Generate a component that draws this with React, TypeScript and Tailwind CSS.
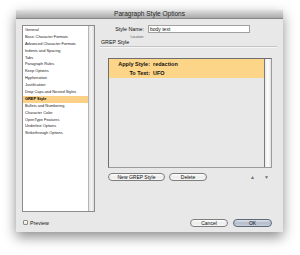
import React from "react";

const items = [
  "General",
  "Basic Character Formats",
  "Advanced Character Formats",
  "Indents and Spacing",
  "Tabs",
  "Paragraph Rules",
  "Keep Options",
  "Hyphenation",
  "Justification",
  "Drop Caps and Nested Styles",
  "GREP Style",
  "Bullets and Numbering",
  "Character Color",
  "OpenType Features",
  "Underline Options",
  "Strikethrough Options",
];

function Btn({ label, w, primary }: { label: string; w: string; primary?: boolean }) {
  return (
    <div
      className={
        "h-[8px] rounded-full border flex items-center justify-center text-[5px] leading-[6px] text-[#111] " +
        w +
        (primary
          ? " border-[#5d6878] bg-gradient-to-b from-[#dfe4ec] via-[#b3bccb] to-[#c9d0dc]"
          : " border-[#7e7e7e] bg-gradient-to-b from-white via-[#ececec] to-[#f6f6f6]")
      }
    >
      {label}
    </div>
  );
}

export default function App() {
  return (
    <div className="w-[300px] h-[255px] bg-white pt-[10px] pl-[16px] font-['Liberation_Sans',_Arial,_sans-serif]">
      <div className="w-[267px] h-[222px] flex flex-col shadow-[0_5px_12px_rgba(0,0,0,0.45)]">
        <div className="h-[9px] bg-gradient-to-b from-[#e2e2e2] to-[#a9a9a9] border-b border-[#858585] flex items-center justify-center">
          <span className="text-[6.5px] leading-[8px] text-[#1e1e1e]">Paragraph Style Options</span>
        </div>
        <div className="flex-1 bg-[#e8e8e8] flex flex-col px-[6px] pt-[6px]">
          <div className="flex h-[187px]">
            <div className="w-[73px] h-full border border-[#8c8c8c] bg-white flex">
              <div className="flex-1 pt-[1px]">
                {items.map((it) => (
                  <div
                    key={it}
                    className={
                      "h-[6.9px] pl-[2px] text-[3.9px] leading-[6.9px] whitespace-nowrap " +
                      (it === "GREP Style" ? "bg-[#fbd087] text-black font-bold" : "text-[#222]")
                    }
                  >
                    {it}
                  </div>
                ))}
              </div>
              <div className="w-[6px] h-full border-l border-[#b5b5b5] bg-gradient-to-r from-[#e4e4e4] via-[#f4f4f4] to-[#dcdcdc]" />
            </div>
            <div className="ml-[6px] w-[176px] flex flex-col">
              <div className="flex items-center h-[8px]">
                <div className="w-[43px] text-right text-[5.3px] leading-[8px] text-[#111]">Style Name:</div>
                <div className="ml-[4px] w-[102px] h-[8px] border border-[#a0a0a0] bg-white text-[5px] leading-[6px] pl-[1px] text-[#111]">
                  body text
                </div>
              </div>
              <div className="w-[43px] mt-[2px] text-right text-[3.3px] leading-[4px] text-[#555]">Location:</div>
              <div className="mt-[0px] text-[5.3px] leading-[6px] text-[#111]">GREP Style</div>
              <div className="-ml-[1px] w-[177px] h-[1px] mt-[1px] bg-[#c4c4c4] border-b border-[#f6f6f6] box-content" />
              <div className="mt-[10px] ml-[7px] w-[164px] h-[110px] border border-[#6e6e6e] border-r-[#9a9a9a] border-b-[#9a9a9a] bg-[#e8e8e8] flex">
                <div className="flex-1">
                  <div className="bg-[#fdd588] pt-[0.5px]">
                    <div className="flex h-[9px] items-center text-[5.5px] font-bold text-[#111]">
                      <div className="w-[41px] text-right">Apply Style:</div>
                      <div className="ml-[3px]">redaction</div>
                    </div>
                    <div className="flex h-[9px] items-center text-[5.5px] font-bold text-[#111]">
                      <div className="w-[41px] text-right">To Text:</div>
                      <div className="ml-[3px]">UFO</div>
                    </div>
                  </div>
                </div>
                <div className="w-[7px] h-full border-l border-[#7a7a7a] bg-gradient-to-r from-[#e9e9e9] via-white to-[#e2e2e2]" />
              </div>
              <div className="mt-[5px] ml-[7px] flex items-center pr-[8px]">
                <Btn label="New GREP Style" w="w-[57px]" />
                <div className="ml-[4px]">
                  <Btn label="Delete" w="w-[38px]" />
                </div>
                <div className="flex-1" />
                <span className="text-[5px] leading-[6px] text-[#6e6e6e]">▲</span>
                <span className="ml-[9px] text-[5px] leading-[6px] text-[#6e6e6e]">▼</span>
              </div>
            </div>
          </div>
          <div className="mt-[6px] h-[9px] flex items-center pr-[5px]">
            <div className="ml-[1px] w-[5px] h-[5px] border border-[#8c8c8c] bg-gradient-to-b from-white to-[#e4e4e4] rounded-[1px]" />
            <span className="ml-[2px] text-[5.3px] leading-[6px] text-[#111]">Preview</span>
            <div className="flex-1" />
            <Btn label="Cancel" w="w-[38px]" />
            <div className="ml-[5px]">
              <Btn label="OK" w="w-[39px]" primary />
            </div>
          </div>
        </div>
      </div>
    </div>
  );
}
